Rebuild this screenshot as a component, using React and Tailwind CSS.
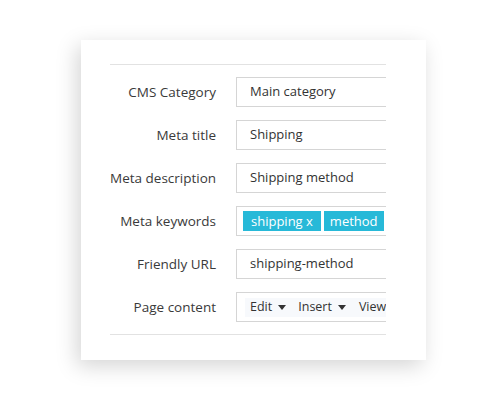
import React from 'react';

const Caret = () => (
  <svg width="8" height="5" viewBox="0 0 8 5" className="ml-[6px] mt-[1px]">
    <path d="M0 0h8L4 5z" fill="#333" />
  </svg>
);

const Row = ({ label, children }) => (
  <div className="flex items-center h-[30px]">
    <div className="w-[106px] shrink-0 text-right text-[13.5px] text-[#3a3a3a] whitespace-nowrap">{label}</div>
    <div className="ml-[20px] w-[220px] shrink-0 h-[30px] border border-[#d5d5d5] flex items-center">
      {children}
    </div>
  </div>
);

const Text = ({ children }) => (
  <span className="pl-[13px] text-[13px] text-[#333] whitespace-nowrap">{children}</span>
);

const App = () => {
  return (
    <div className="w-[500px] h-[400px] bg-white pt-[40px] pl-[81px]" style={{ fontFamily: '"Open Sans", sans-serif' }}>
      <div className="w-[345px] h-[320px] bg-white shadow-[-4px_6px_20px_rgba(0,0,0,0.17)] pl-[29px] pr-[40px] pt-[24px]">
        <div className="overflow-hidden">
          <div className="h-px bg-[#e2e2e2]" />
          <div className="flex flex-col gap-[13px] pt-[12px] pb-[12px]">
            <Row label="CMS Category"><Text>Main category</Text></Row>
            <Row label="Meta title"><Text>Shipping</Text></Row>
            <Row label="Meta description"><Text>Shipping method</Text></Row>
            <Row label="Meta keywords">
              <div className="flex gap-[3px] pl-[6px]">
                <span className="h-[20px] px-[8px] bg-[#27b9d8] text-white text-[13px] leading-[20px] whitespace-nowrap">shipping x</span>
                <span className="h-[20px] px-[6px] bg-[#27b9d8] text-white text-[13px] leading-[20px] whitespace-nowrap">method</span>
              </div>
            </Row>
            <Row label="Friendly URL"><Text>shipping-method</Text></Row>
            <Row label="Page content">
              <div className="ml-[8px] h-[19px] flex-1 bg-[#f7f9fc] flex items-center text-[12.5px] text-[#333] whitespace-nowrap">
                <span className="ml-[5px] flex items-center">Edit<Caret /></span>
                <span className="ml-[12px] flex items-center">Insert<Caret /></span>
                <span className="ml-[13px]">View</span>
              </div>
            </Row>
          </div>
          <div className="h-px bg-[#e2e2e2]" />
        </div>
      </div>
    </div>
  );
};

export default App;
